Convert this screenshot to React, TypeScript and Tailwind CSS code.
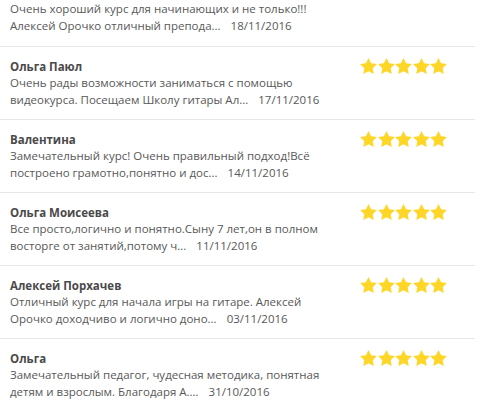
import React from "react";

const Star = () => (
  <svg width="17" height="16" viewBox="2 2 20 19" className="block">
    <polygon
      points="12,2 15.09,8.26 22,9.27 17,14.14 18.18,21.02 12,17.77 5.82,21.02 7,14.14 2,9.27 8.91,8.26"
      fill="#FDD628"
    />
  </svg>
);

const Stars = () => (
  <div className="flex gap-[0.5px] mt-[0px] mr-[28px]">
    <Star />
    <Star />
    <Star />
    <Star />
    <Star />
  </div>
);

type Review = {
  name?: string;
  line1: string;
  line2: string;
  date: string;
};

const reviews: Review[] = [
  {
    name: "Ольга Паюл",
    line1: "Очень рады возможности заниматься с помощью",
    line2: "видеокурса. Посещаем Школу гитары Ал...",
    date: "17/11/2016",
  },
  {
    name: "Валентина",
    line1: "Замечательный курс! Очень правильный подход!Всё",
    line2: "построено грамотно,понятно и дос...",
    date: "14/11/2016",
  },
  {
    name: "Ольга Моисеева",
    line1: "Все просто,логично и понятно.Сыну 7 лет,он в полном",
    line2: "восторге от занятий,потому ч...",
    date: "11/11/2016",
  },
  {
    name: "Алексей Порхачев",
    line1: "Отличный курс для начала игры на гитаре. Алексей",
    line2: "Орочко доходчиво и логично доно...",
    date: "03/11/2016",
  },
  {
    name: "Ольга",
    line1: "Замечательный педагог, чудесная методика, понятная",
    line2: "детям и взрослым. Благодаря А.…",
    date: "31/10/2016",
  },
];

const Desc = ({ r }: { r: Review }) => (
  <div className="text-[11.5px] leading-[16.5px] text-[#585858] whitespace-nowrap">
    <div>{r.line1}</div>
    <div>
      {r.line2}
      <span className="ml-[10px]">{r.date}</span>
    </div>
  </div>
);

export default function App() {
  return (
    <div
      className="w-[481px] h-[403px] overflow-hidden bg-white"
      style={{ fontFamily: '"Open Sans", "Noto Sans", sans-serif' }}
    >
      <div className="w-[475px]">
        <div className="pl-[10px] pt-[1px] pb-[12px]">
          <Desc
            r={{
              line1: "Очень хороший курс для начинающих и не только!!!",
              line2: "Алексей Орочко отличный препода...",
              date: "18/11/2016",
            }}
          />
        </div>
        {reviews.map((r, i) => (
          <div
            key={i}
            className="border-t border-[#e6e6e6] pt-[11px] pb-[11px] flex justify-between items-start"
          >
            <div className="pl-[10px]">
              <div className="text-[11.5px] leading-[17px] font-bold text-[#4a4a4a]">
                {r.name}
              </div>
              <Desc r={r} />
            </div>
            <Stars />
          </div>
        ))}
      </div>
    </div>
  );
}
